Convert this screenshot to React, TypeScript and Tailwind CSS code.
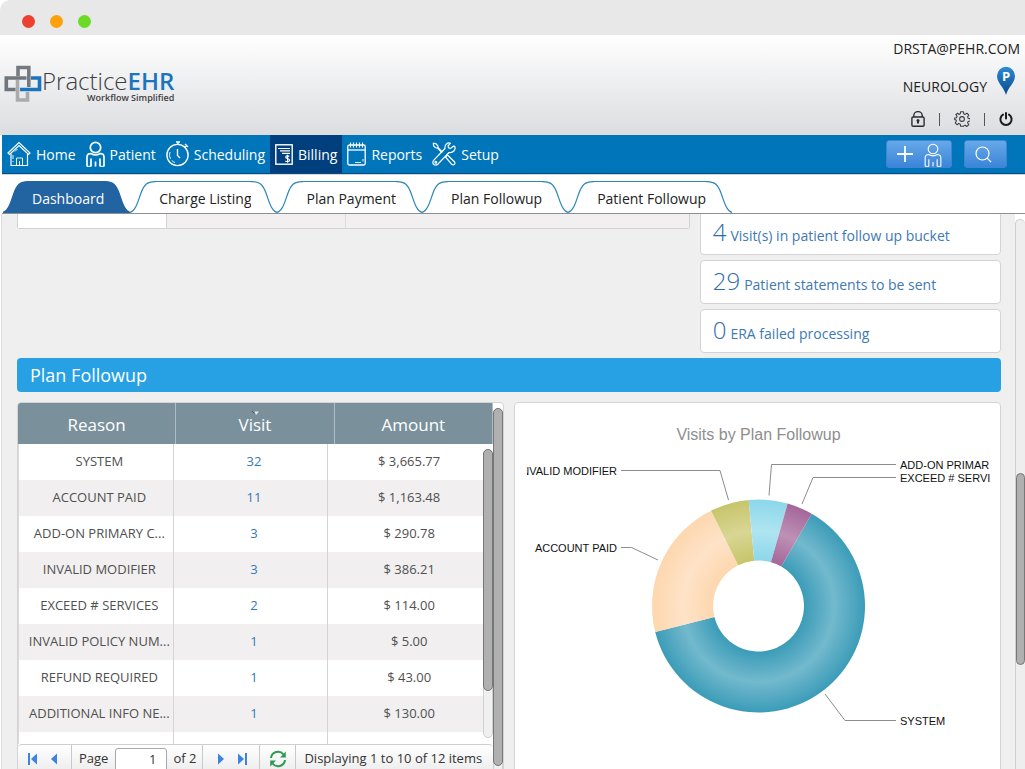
import React from "react";

type IconProps = { className?: string };

const HomeIcon = ({ className = "" }: IconProps) => (
  <svg className={className} viewBox="0 0 24 26" fill="none" stroke="currentColor" strokeWidth="1.2" aria-hidden="true">
    <path d="M1 12 L12 1.5 L23 12 L21.5 13.5 L12 4.5 L2.5 13.5 Z" />
    <path d="M4 12.5 V24.5 H20.5 V12.5" />
    <path d="M9.5 24.5 V17 H15.5 V24.5 M12.5 20 V24" strokeWidth="0.9" />
    <path d="M6 14 V18 M6 20 V21 M8 10.5 L10.5 8" strokeWidth="0.9" />
  </svg>
);

const PersonIcon = ({ className = "", thin = false }: IconProps & { thin?: boolean }) => (
  <svg className={className} viewBox="0 0 19 26" fill="none" stroke="currentColor" strokeWidth={thin ? 1.2 : 1.7} aria-hidden="true">
    <circle cx="9.5" cy="6.5" r="5.2" />
    <path d="M1 25.5 V16 Q1 12.5 5 12.5 Q9.5 15.5 14 12.5 Q18 12.5 18 16 V25.5" />
    <path d="M5 25.5 V17.5 M14 25.5 V17.5 M9.5 25.5 V20.5" />
    <path d="M1 25.3 H5 M14 25.3 H18" strokeWidth="1" />
  </svg>
);

const StopwatchIcon = ({ className = "" }: IconProps) => (
  <svg className={className} viewBox="0 0 23 26" fill="none" stroke="currentColor" strokeWidth="1.4" aria-hidden="true">
    <circle cx="11.5" cy="14" r="10.6" />
    <path d="M10 1 H14 M12 1 V4 M19 3 L22 6 M20.5 4.5 L18.5 6.5" />
    <path d="M11.5 8 V14.5 L14 17" />
    <path d="M4 11 A8 8 0 0 0 9 21.5" strokeWidth="0.9" strokeDasharray="7 2" />
  </svg>
);

const BillIcon = ({ className = "" }: IconProps) => (
  <svg className={className} viewBox="0 0 18 21" fill="none" stroke="currentColor" strokeWidth="1.4" aria-hidden="true">
    <rect x="0.8" y="0.8" width="16.4" height="19.4" />
    <path d="M3 4.5 H15 M5 6.9 H15 M7 9.3 H15" strokeWidth="1.2" />
    <path d="M14.3 12.4 C12.5 11.2 10.6 12 10.8 13.3 C11 14.8 14.6 14.3 14.6 16.2 C14.6 17.7 12 18 10.4 16.9 M12.6 10.8 V18.8" strokeWidth="1.2" />
  </svg>
);

const NotepadIcon = ({ className = "" }: IconProps) => (
  <svg className={className} viewBox="0 0 19 24" fill="none" stroke="currentColor" strokeWidth="1.3" aria-hidden="true">
    <rect x="0.8" y="3" width="17.4" height="20" rx="1.5" />
    <path d="M1 8 H18" />
    <path d="M3.5 0.5 V5.5 M6.5 0.5 V5.5 M9.5 0.5 V5.5 M12.5 0.5 V5.5 M15.5 0.5 V5.5" strokeWidth="1.1" />
    <path d="M8 20.5 H14 M16 17 V19.5" strokeWidth="0.9" />
  </svg>
);

const ToolsIcon = ({ className = "" }: IconProps) => (
  <svg className={className} viewBox="0 0 24 24" fill="none" stroke="currentColor" strokeWidth="1.2" strokeLinejoin="round" aria-hidden="true">
    <path d="M1.2 1.2 L4.2 1.8 L6 4.2 L5.8 5.4 L10.6 10.2 M1.2 1.2 L1.8 4.2 L4.2 6 L5.4 5.8 L9.8 10.6" />
    <path d="M13.5 15 L15.5 13 L22.6 20 Q23.4 21.4 22.4 22.4 Q21.4 23.4 20 22.6 Z" />
    <path d="M21.3 4.2 L18.6 6.4 L16.6 5.9 L16 3.8 L18.5 1.2 C15.5 0.2 12.5 2.5 13 6.5 L1.6 18.4 C0.2 20.2 1 22.2 2.2 22.8 C3.6 23.5 5 23 6 22 L17 10.5 C21 11.3 24 7.8 22.8 4.4 Z" />
    <circle cx="3.8" cy="20.3" r="0.9" />
  </svg>
);

const Logo = () => (
  <a href="#home" aria-label="Practice EHR, Workflow Simplified" className="flex items-center">
    <svg className="h-[37px] w-[38px] shrink-0" viewBox="0 0 38 37" fill="none" strokeWidth="3.6" aria-hidden="true">
      <path d="M13.5 15 V35 H23.5 V27" stroke="#a9abae" />
      <path d="M27 13 H35.5 V24.5 H16" stroke="#1b75bc" />
      <path d="M14 11 V2.5 H24.8 V22" stroke="#757a80" />
      <path d="M22.5 13 H2.3 V24.5 H11.5" stroke="#70757b" />
    </svg>
    <span className="flex flex-col items-end pt-1">
      <span className="text-[24px] leading-[25px] font-light text-[#3d3d3f]">
        Practice<span className="font-semibold text-[#1b75bc]">EHR</span>
      </span>
      <span className="text-[9px] leading-[10px] font-semibold text-[#3d3d3f]">Workflow Simplified</span>
    </span>
  </a>
);

const navItems = [
  { label: "Home", icon: <HomeIcon className="h-[26px] w-6" />, active: false },
  { label: "Patient", icon: <PersonIcon className="h-[26px] w-[19px]" />, active: false },
  { label: "Scheduling", icon: <StopwatchIcon className="h-[26px] w-[23px]" />, active: false },
  { label: "Billing", icon: <BillIcon className="h-[21px] w-[18px]" />, active: true },
  { label: "Reports", icon: <NotepadIcon className="h-6 w-[19px]" />, active: false },
  { label: "Setup", icon: <ToolsIcon className="h-6 w-6" />, active: false },
];

const CAP = "M0 31.5 C6 29.5 8 20 11 12 C14 4 17 0.6 25 0.6 H26";

function Tab({ label, active = false }: { label: string; active?: boolean }) {
  const fill = active ? "#2263a1" : "#ffffff";
  const stroke = active ? "#2263a1" : "#2a86bd";
  return (
    <button type="button" role="tab" aria-selected={active} className="flex h-8 items-stretch">
      <svg className="h-8 w-[26px]" viewBox="0 0 26 32" aria-hidden="true">
        <path d={CAP + " V32 H0 Z"} fill={fill} />
        <path d={CAP} fill="none" stroke={stroke} strokeWidth="1.2" />
      </svg>
      <span
        className={
          active
            ? "flex items-center border-t border-[#2263a1] bg-[#2263a1] pt-[2px] pl-[3px] text-[14px] leading-5 text-white"
            : "flex items-center border-t border-[#2a86bd] bg-white pt-[2px] pl-[3px] text-[14px] leading-5 text-[#222]"
        }
      >
        {label}
      </span>
      <svg className="h-8 w-[26px]" viewBox="0 0 26 32" aria-hidden="true">
        <g transform="translate(26 0) scale(-1 1)">
          <path d={CAP + " V32 H0 Z"} fill={fill} />
          <path d={CAP} fill="none" stroke={stroke} strokeWidth="1.2" />
        </g>
      </svg>
    </button>
  );
}

const stats = [
  { count: "4", text: "Visit(s) in patient follow up bucket" },
  { count: "29", text: "Patient statements to be sent" },
  { count: "0", text: "ERA failed processing" },
];

const rows = [
  ["SYSTEM", "32", "$ 3,665.77"],
  ["ACCOUNT PAID", "11", "$ 1,163.48"],
  ["ADD-ON PRIMARY C...", "3", "$ 290.78"],
  ["INVALID MODIFIER", "3", "$ 386.21"],
  ["EXCEED # SERVICES", "2", "$ 114.00"],
  ["INVALID POLICY NUM...", "1", "$ 5.00"],
  ["REFUND REQUIRED", "1", "$ 43.00"],
  ["ADDITIONAL INFO NE...", "1", "$ 130.00"],
];

const slices = [
  { id: "system", value: 32, edge: "#3b9cb8", mid: "#73b9cd" },
  { id: "paid", value: 11, edge: "#fdd7ae", mid: "#fee3c8" },
  { id: "modifier", value: 3, edge: "#c7c56a", mid: "#d8d694" },
  { id: "addon", value: 3, edge: "#8cd7ea", mid: "#afe4f1" },
  { id: "exceed", value: 2, edge: "#a4669a", mid: "#bd91b5" },
];

const CX = 231.5;
const CY = 203;
const OUTER = 106.5;
const INNER = 45.5;

function point(radius: number, degrees: number) {
  const a = (degrees * Math.PI) / 180;
  return `${(CX + radius * Math.sin(a)).toFixed(2)} ${(CY - radius * Math.cos(a)).toFixed(2)}`;
}

function DonutChart() {
  const total = slices.reduce((sum, s) => sum + s.value, 0);
  let angle = 30;
  return (
    <svg className="block h-[366px] w-[464px] max-w-full overflow-hidden" viewBox="0 0 464 366" role="img" aria-label="Visits by Plan Followup">
      <defs>
        {slices.map((s) => (
          <radialGradient key={s.id} id={s.id} gradientUnits="userSpaceOnUse" cx={CX} cy={CY} r={OUTER}>
            <stop offset={INNER / OUTER} stopColor={s.edge} />
            <stop offset="0.71" stopColor={s.mid} />
            <stop offset="1" stopColor={s.edge} />
          </radialGradient>
        ))}
      </defs>
      {slices.map((s) => {
        const start = angle;
        angle += (s.value / total) * 360;
        const large = angle - start > 180 ? 1 : 0;
        const d = `M${point(OUTER, start)} A${OUTER} ${OUTER} 0 ${large} 1 ${point(OUTER, angle)} L${point(INNER, angle)} A${INNER} ${INNER} 0 ${large} 0 ${point(INNER, start)} Z`;
        return <path key={s.id} d={d} fill={`url(#${s.id})`} />;
      })}
      <g fill="none" stroke="#8c8c8c" strokeWidth="1">
        <path d="M94 67.5 H193 L201.5 97" />
        <path d="M242 92.5 L244.5 61.5 H369" />
        <path d="M275 101 L286 74.5 H369" />
        <path d="M94 144.5 H104.5 L131 157" />
        <path d="M298 291 L318 317.5 H369" />
      </g>
      <text x="231.5" y="37" textAnchor="middle" className="fill-[#8e8e8e] text-[16px]">Visits by Plan Followup</text>
      <g className="fill-[#111] text-[11px]">
        <text x="90" y="72" textAnchor="end">INVALID MODIFIER</text>
        <text x="90" y="149" textAnchor="end">ACCOUNT PAID</text>
        <text x="373" y="66">ADD-ON PRIMAR</text>
        <text x="373" y="79">EXCEED # SERVI</text>
        <text x="373" y="322">SYSTEM</text>
      </g>
    </svg>
  );
}

function PagerButton({ label, d }: { label: string; d: string }) {
  return (
    <button type="button" aria-label={label} className="flex h-5 w-[21px] items-center justify-center text-[#3d83e0]">
      <svg className="h-3 w-[10px]" viewBox="0 0 10 12" fill="currentColor" aria-hidden="true">
        <path d={d} />
      </svg>
    </button>
  );
}

function Pager() {
  return (
    <form className="flex h-[29px] items-center rounded-t border-t border-[#cfcfcf] bg-linear-to-b from-white to-[#ececec] text-[13px] text-[#333]" onSubmit={(e) => e.preventDefault()}>
      <div className="flex h-full items-center border-r border-[#c9c9c9] pr-[7px] pl-1">
        <PagerButton label="First page" d="M0 0 H2 V12 H0 Z M9 0.5 V11.5 L3 6 Z" />
        <PagerButton label="Previous page" d="M8 0.5 V11.5 L2 6 Z" />
      </div>
      <label htmlFor="page" className="px-[7px]">Page</label>
      <input id="page" type="text" defaultValue="1" className="h-[23px] w-[52px] rounded-t-[3px] border border-[#a9a9a9] bg-white pr-[10px] text-right text-[13px]" />
      <span className="flex h-full items-center border-r border-[#c9c9c9] px-[6px]">of 2</span>
      <div className="flex h-full items-center border-r border-[#c9c9c9] px-[7px]">
        <PagerButton label="Next page" d="M2 0.5 V11.5 L8 6 Z" />
        <PagerButton label="Last page" d="M1 0.5 V11.5 L7 6 Z M8 0 H10 V12 H8 Z" />
      </div>
      <button type="button" aria-label="Refresh" className="flex h-full w-9 items-center justify-center border-r border-[#c9c9c9]">
        <svg className="h-[18px] w-[18px]" viewBox="0 0 18 18" fill="none" stroke="#2d9a52" strokeWidth="2" aria-hidden="true">
          <path d="M2 8 A7 7 0 0 1 14.5 4.5 M16 10 A7 7 0 0 1 3.5 13.5" />
          <path d="M16.8 1.5 V7.5 H11 Z M1.2 16.5 V10.5 H7 Z" fill="#2d9a52" stroke="none" />
        </svg>
      </button>
      <span className="pl-2 whitespace-nowrap">Displaying 1 to 10 of 12 items</span>
    </form>
  );
}

function FollowupTable() {
  return (
    <section className="flex rounded border border-[#d4d4d4] bg-white" aria-label="Plan followup reasons">
      <div className="min-w-0 flex-1">
        <table className="w-full table-fixed border-separate border-spacing-0 rounded-tl-[3px] bg-[#7a919c]">
          <thead>
            <tr className="h-[41px] text-[17px] text-white">
              <th scope="col" className="border-r border-[#aebcc3] pt-[2px] font-medium">Reason</th>
              <th scope="col" className="relative border-r border-[#aebcc3] pt-[2px] font-medium">
                <svg className="absolute top-[7px] left-1/2 h-[5px] w-2 -translate-x-1/2" viewBox="0 0 8 5" aria-hidden="true">
                  <path d="M1 1 L3.5 3.5" stroke="#44525a" strokeWidth="1" />
                  <path d="M3.5 1.5 H8 L5 5 Z" fill="#e6ebed" />
                </svg>
                Visit
              </th>
              <th scope="col" className="border-r border-[#aebcc3] pt-[2px] font-medium">Amount</th>
            </tr>
          </thead>
        </table>
        <div className="flex h-[300px] overflow-hidden">
          <div className="min-w-0 flex-1 border-l border-[#d9d9d9]">
            <table className="w-full table-fixed border-separate border-spacing-0 text-[13px] text-[#505050]">
              <tbody>
                {rows.map(([reason, visits, amount]) => (
                  <tr key={reason} className="h-9 odd:bg-white even:bg-[#f1efef]">
                    <td className="truncate border-r border-[#d4d4d4] pr-0 pl-[7px] text-center">{reason}</td>
                    <td className="border-r border-[#d4d4d4] pl-[7px] text-center">
                      <a href={"#" + visits} className="text-[#337ab7]">{visits}</a>
                    </td>
                    <td className="pl-[7px] text-center">{amount}</td>
                  </tr>
                ))}
                <tr className="h-9">
                  <td className="border-r border-[#d4d4d4]" />
                  <td className="border-r border-[#d4d4d4]" />
                  <td />
                </tr>
              </tbody>
            </table>
          </div>
          <div className="mt-[5px] mb-[6px] w-[10px] rounded-full border border-[#d0d0d0] bg-[#f0f0f0]">
            <div className="-mx-px -mt-px h-[242px] rounded-full border border-[#777] bg-[#b0b0b0]" />
          </div>
        </div>
        <Pager />
      </div>
      <div className="mt-[5px] w-[10px] rounded-full border border-[#d0d0d0] bg-[#f0f0f0]">
        <div className="-mx-px -mt-px h-[358px] rounded-full border border-[#777] bg-[#b0b0b0]" />
      </div>
    </section>
  );
}

export default function App() {
  return (
    <div className="flex h-screen flex-col overflow-hidden bg-white font-['Open_Sans',sans-serif]">
      <div className="shrink-0 bg-white">
        <div className="flex h-[35px] items-center gap-[15px] rounded-tl-[10px] bg-[#e8e8e8] pt-[7px] pl-[22px]">
          <span className="h-[13px] w-[13px] rounded-full bg-[#ec4130]" />
          <span className="h-[13px] w-[13px] rounded-full bg-[#fea10c]" />
          <span className="h-[13px] w-[13px] rounded-full bg-[#6cdb28]" />
        </div>
      </div>

      <header className="flex h-[100px] shrink-0 items-start justify-between bg-linear-to-b from-white to-[#dcdde0] pl-1">
        <div className="pt-[29px]">
          <Logo />
        </div>
        <div className="flex flex-col items-end pt-1 pr-[5px] text-[14px] text-[#222]">
          <span className="leading-5">DRSTA@PEHR.COM</span>
          <div className="flex items-center gap-[9px] pt-[6px] pr-1">
            <span className="pt-3 leading-5">NEUROLOGY</span>
            <svg className="h-[30px] w-5" viewBox="0 0 20 30" aria-hidden="true">
              <defs>
                <linearGradient id="pin" x1="0" y1="0" x2="0" y2="1">
                  <stop offset="0" stopColor="#2e8ad6" />
                  <stop offset="1" stopColor="#084a8c" />
                </linearGradient>
              </defs>
              <path d="M10 29 C8 21 1 17 1 10 A9 9.2 0 0 1 19 10 C19 17 12 21 10 29 Z" fill="url(#pin)" />
              <text x="10" y="15" textAnchor="middle" fill="#fff" className="text-[13px] font-bold">P</text>
            </svg>
          </div>
          <div className="flex items-center gap-[14px] pt-[14px] pr-[7px]">
            <button type="button" aria-label="Lock">
              <svg className="block h-4 w-[14px]" viewBox="0 0 14 16" fill="none" stroke="#2b2b30" strokeWidth="1.4" aria-hidden="true">
                <rect x="0.9" y="6" width="12.2" height="9.2" rx="1.2" />
                <path d="M2.8 6 V4.6 A4.2 4 0 0 1 11.2 4.6 V6" />
                <path d="M7 9 V12.6" strokeWidth="2" />
                <circle cx="7" cy="9.4" r="1.5" fill="#2b2b30" stroke="none" />
              </svg>
            </button>
            <span className="h-[13px] w-px bg-[#55555c]" />
            <button type="button" aria-label="Settings">
              <svg className="block h-4 w-4" viewBox="0 0 24 24" fill="none" stroke="#3a3a40" strokeWidth="1.6" aria-hidden="true">
                <path d="M10 1 h4 l.7 3.2 2 .9 2.8-1.8 2.7 2.8-1.8 2.7.9 2.1 3.2.7v3.2l-3.2.9-.9 2 1.8 2.8-2.7 2.7-2.8-1.8-2 .9L14 23h-4l-.7-3.3-2-.9-2.8 1.8-2.7-2.7 1.8-2.8-.9-2L1 12.9V10.4l2.7-.4.9-2.1L2.8 5.2 5.5 3.3 7.3 5.1l2-.9Z" strokeLinejoin="round" />
                <circle cx="12" cy="12" r="3.6" />
              </svg>
            </button>
            <span className="h-[13px] w-px bg-[#55555c]" />
            <button type="button" aria-label="Log out">
              <svg className="block h-[14px] w-[14px]" viewBox="0 0 14 14" fill="none" stroke="#1b1b1e" strokeWidth="2" strokeLinecap="round" aria-hidden="true">
                <path d="M4 2.6 A5.6 5.6 0 1 0 10 2.6 M7 1 V6.5" />
              </svg>
            </button>
          </div>
        </div>
      </header>

      <nav className="ml-[2px] flex h-[39px] shrink-0 items-stretch justify-between border-b border-[#0a4a86] bg-[#0075ba] text-[14px] text-white">
        <div className="flex">
          {navItems.map((item) => (
            <a
              key={item.label}
              href={"#" + item.label.toLowerCase()}
              className={item.active ? "flex items-center gap-[5px] bg-[#003f7d] px-[5px]" : "flex items-center gap-[5px] px-[5px]"}
            >
              {item.icon}
              <span>{item.label}</span>
            </a>
          ))}
        </div>
        <div className="flex items-center gap-3 pr-[18px]">
          <button type="button" aria-label="Add patient" className="flex h-7 w-[66px] items-end justify-between rounded-[3px] border border-[#3c86d3] bg-linear-to-b from-[#66a9e8] to-[#3b84d8] pr-[9px] pl-[10px]">
            <svg className="mb-[5px] h-4 w-4" viewBox="0 0 16 16" stroke="#fff" strokeWidth="1.8" aria-hidden="true">
              <path d="M0 8 H16 M8 0 V16" />
            </svg>
            <PersonIcon thin className="h-6 w-[18px]" />
          </button>
          <button type="button" aria-label="Search" className="flex h-7 w-[43px] items-center justify-center rounded-[3px] border border-[#3c86d3] bg-linear-to-b from-[#66a9e8] to-[#3b84d8] pr-1">
            <svg className="h-[17px] w-[17px]" viewBox="0 0 17 17" fill="none" stroke="#fff" strokeWidth="1.2" aria-hidden="true">
              <circle cx="7.5" cy="7.5" r="6.5" />
              <path d="M12.2 12.2 L16 16" />
            </svg>
          </button>
        </div>
      </nav>

      <div role="tablist" className="ml-[2px] flex h-10 shrink-0 items-end border-b border-[#8f8f8f] bg-white pl-px shadow-[inset_0_1px_0_#d5d5d5]">
        <Tab label="Dashboard" active />
        <Tab label="Charge Listing" />
        <Tab label="Plan Payment" />
        <Tab label="Plan Followup" />
        <Tab label="Patient Followup" />
      </div>

      <div className="flex min-h-0 flex-1 overflow-hidden">
        <main className="ml-px flex min-w-0 flex-1 flex-col border-l border-[#dedede] bg-[#efefef] pr-[14px] pl-[15px]">
          <div className="grid grid-cols-[67fr_30fr] items-start gap-[10px]">
            <div className="grid h-[15px] grid-cols-[149fr_180fr_343fr] rounded-b-[3px] border-x border-b border-[#d2d2d2]">
              <div className="border-r border-[#d2d2d2] bg-white" />
              <div className="border-r border-[#dcdcdc] bg-[#f1efef]" />
              <div className="bg-[#f1efef]" />
            </div>
            <ul className="flex flex-col gap-[5px]">
              {stats.map((s) => (
                <li key={s.text} className="first:-mt-[3px]">
                  <a href={"#stat-" + s.count} className="flex h-11 items-baseline gap-1 rounded border border-[#d4d4d4] bg-white px-3 pt-[3px] text-[#4079b3]">
                    <span className="text-[24px] leading-[34px] font-light text-[#2f6cab]">{s.count}</span>
                    <span className="text-[14px]">{s.text}</span>
                  </a>
                </li>
              ))}
            </ul>
          </div>

          <h2 className="mt-[5px] flex h-[34px] shrink-0 items-center rounded bg-[#27a1e4] pl-[13px] text-[18px] text-white">Plan Followup</h2>

          <div className="mt-[10px] grid grid-cols-2 gap-[10px]">
            <FollowupTable />
            <section className="flex justify-center rounded border border-[#d4d4d4] bg-white pl-[2px] font-['Liberation_Sans',sans-serif]" aria-label="Visits chart">
              <DonutChart />
            </section>
          </div>
        </main>
        <div className="w-[10px] shrink-0 bg-white pt-[5px]">
          <div className="h-full rounded-t-full border-t border-l border-[#cfcfcf] bg-[#eeeeee] pt-[253px]">
            <div className="h-[192px] rounded-full border border-[#777] bg-[#b0b0b0]" />
          </div>
        </div>
      </div>
    </div>
  );
}
